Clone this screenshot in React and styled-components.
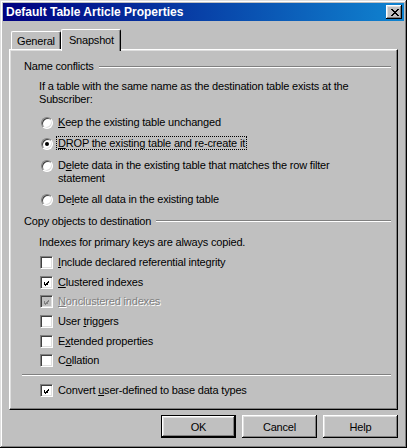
import React from 'react';
import styled, { createGlobalStyle } from 'styled-components';

const GlobalStyle = createGlobalStyle`
  body {
    margin: 0;
    background: #c0c0c0;
  }
`;

const Window = styled.div`
  width: 407px;
  height: 448px;
  box-sizing: border-box;
  padding: 3px;
  background: #c0c0c0;
  box-shadow: inset -1px -1px #000, inset 1px 1px #dfdfdf, inset -2px -2px #808080, inset 2px 2px #fff;
  display: flex;
  flex-direction: column;
  font-family: 'Liberation Sans', Arial, sans-serif;
  font-size: 11px;
  letter-spacing: -0.18px;
  color: #000;
`;

const TitleBar = styled.div`
  height: 18px;
  display: flex;
  align-items: center;
  justify-content: space-between;
  padding: 0 2px 0 3px;
  background: linear-gradient(90deg, #000080, #1084d0);
`;

const Title = styled.span`
  color: #fff;
  font-weight: bold;
  font-size: 12px;
  letter-spacing: 0;
`;

const CloseButton = styled.button`
  width: 16px;
  height: 14px;
  padding: 0 0 0 1px;
  border: none;
  background: #c0c0c0;
  box-shadow: inset -1px -1px #000, inset 1px 1px #fff, inset -2px -2px #808080, inset 2px 2px #dfdfdf;
  display: flex;
  align-items: center;
  justify-content: center;
`;

const Body = styled.div`
  padding: 8px 6px 0 6px;
  display: flex;
  flex-direction: column;
`;

const TabStrip = styled.div`
  display: flex;
  align-items: flex-end;
  height: 22px;
  margin-bottom: -2px;
  padding-left: 2px;
  position: relative;
  z-index: 1;
`;

const Tab = styled.div`
  box-sizing: border-box;
  height: ${(p) => (p.$active ? '22px' : '18px')};
  margin-bottom: ${(p) => (p.$active ? '0' : '2px')};
  padding: ${(p) => (p.$active ? '0 6px 2px 7px' : '0 5px')};
  display: flex;
  align-items: center;
  background: #c0c0c0;
  border-left: 1px solid #fff;
  border-top: 1px solid #fff;
  border-right: 1px solid #000;
  border-top-left-radius: 2px;
  border-top-right-radius: 2px;
  box-shadow: inset -1px 0 #808080;
`;

const Panel = styled.div`
  height: 361px;
  box-sizing: border-box;
  border: 1px solid;
  border-color: #fff #000 #000 #fff;
  box-shadow: inset -1px -1px #808080, inset 1px 1px #dfdfdf;
  padding: 10px 6px 0 14px;
  display: flex;
  flex-direction: column;
`;

const GroupHeading = styled.div`
  display: flex;
  align-items: center;
  gap: 5px;
  height: 13px;
  line-height: 13px;
  margin-top: ${(p) => p.$top || 0}px;

  &::after {
    content: '';
    flex: 1;
    border-top: 1px solid #808080;
    border-bottom: 1px solid #fff;
  }
`;

const Note = styled.div`
  line-height: 13px;
  padding-left: 15px;
  margin-top: ${(p) => p.$top || 0}px;
`;

const OptionList = styled.div`
  display: flex;
  flex-direction: column;
  margin-top: ${(p) => p.$top || 0}px;
`;

const RadioRow = styled.label`
  display: flex;
  align-items: flex-start;
  padding: ${(p) => (p.$nudge ? '5px 0 4px' : '4px 0')};
  padding-left: 17px;
  line-height: 13px;
`;

const RadioCircle = styled.span`
  flex: none;
  width: 12px;
  height: 12px;
  box-sizing: border-box;
  margin-top: 1px;
  border-radius: 50%;
  border: 1px solid;
  border-color: #808080 #fff #fff #808080;
  box-shadow: inset 1px 1px #404040, inset -1px -1px #dfdfdf;
  background: #fff;
  display: flex;
  align-items: center;
  justify-content: center;

  &::after {
    content: '';
    width: 4px;
    height: 4px;
    border-radius: 50%;
    background: ${(p) => (p.$checked ? '#000' : 'transparent')};
  }
`;

const RadioText = styled.span`
  margin-left: 5px;
  width: 300px;
`;

const Focus = styled.span`
  border: 1px dotted #000;
  margin: -1px 0 0 -2px;
  padding: 0 1px;
`;

const CheckRow = styled.label`
  display: flex;
  align-items: center;
  height: 19.6px;
  padding-left: 16px;
  color: ${(p) => (p.$disabled ? '#808080' : '#000')};
  text-shadow: ${(p) => (p.$disabled ? '1px 1px #fff' : 'none')};
  margin-top: ${(p) => p.$top || 0}px;
`;

const CheckBox = styled.span`
  flex: none;
  width: 13px;
  height: 13px;
  box-sizing: border-box;
  padding: 2px;
  border: 1px solid;
  border-color: #808080 #fff #fff #808080;
  box-shadow: inset 1px 1px #404040, inset -1px -1px #dfdfdf;
  background: ${(p) => (p.$disabled ? '#c0c0c0' : '#fff')};
  display: flex;
`;

const CheckText = styled.span`
  margin-left: 5px;
  line-height: 13px;
`;

const Separator = styled.div`
  margin: 3px 0 0 -2px;
  border-top: 1px solid #808080;
  border-bottom: 1px solid #fff;
`;

const ButtonRow = styled.div`
  display: flex;
  justify-content: flex-end;
  gap: 6px;
  margin-top: 5px;
`;

const Button = styled.button`
  width: 75px;
  height: 23px;
  box-sizing: border-box;
  padding: 0;
  font-family: inherit;
  font-size: 11px;
  letter-spacing: inherit;
  color: #000;
  background: #c0c0c0;
  border: ${(p) => (p.$default ? '1px solid #000' : 'none')};
  box-shadow: inset -1px -1px #000, inset 1px 1px #fff, inset -2px -2px #808080, inset 2px 2px #dfdfdf;
`;

const CheckMark = ({ color }) => {
  const cols = [2, 3, 4, 3, 2, 1, 0];
  return (
    <svg width="9" height="9" viewBox="0 0 9 9" shapeRendering="crispEdges">
      {cols.map((y, x) => (
        <rect key={x} x={x + 1} y={y + 1} width="1" height="3" fill={color} />
      ))}
    </svg>
  );
};

const Radio = ({ checked, children, nudge }) => (
  <RadioRow $nudge={nudge}>
    <RadioCircle $checked={checked} />
    <RadioText>{children}</RadioText>
  </RadioRow>
);

const Check = ({ checked, disabled, children, top }) => (
  <CheckRow $disabled={disabled} $top={top}>
    <CheckBox $disabled={disabled}>
      {checked && <CheckMark color={disabled ? '#808080' : '#000'} />}
    </CheckBox>
    <CheckText>{children}</CheckText>
  </CheckRow>
);

export default function App() {
  return (
    <>
      <GlobalStyle />
      <Window>
        <TitleBar>
          <Title>Default Table Article Properties</Title>
          <CloseButton>
            <svg width="8" height="7" viewBox="0 0 8 7" shapeRendering="crispEdges">
              <path d="M0 0h2v1h-2zM6 0h2v1h-2zM1 1h2v1h-2zM5 1h2v1h-2zM2 2h4v1h-4zM3 3h2v1h-2zM2 4h4v1h-4zM1 5h2v1h-2zM5 5h2v1h-2zM0 6h2v1h-2zM6 6h2v1h-2z" fill="#000" />
            </svg>
          </CloseButton>
        </TitleBar>
        <Body>
          <TabStrip>
            <Tab>General</Tab>
            <Tab $active>Snapshot</Tab>
          </TabStrip>
          <Panel>
            <GroupHeading>Name conflicts</GroupHeading>
            <Note $top={7}>
              If a table with the same name as the destination table exists at the
              <br />
              Subscriber:
            </Note>
            <OptionList $top={5.5}>
              <Radio>
                <u>K</u>eep the existing table unchanged
              </Radio>
              <Radio checked>
                <Focus>
                  <u>D</u>ROP the existing table and re-create it
                </Focus>
              </Radio>
              <Radio nudge>
                D<u>e</u>lete data in the existing table that matches the row filter
                <br />
                statement
              </Radio>
              <Radio>
                De<u>l</u>ete all data in the existing table
              </Radio>
            </OptionList>
            <GroupHeading $top={5}>Copy objects to destination</GroupHeading>
            <Note $top={8}>Indexes for primary keys are always copied.</Note>
            <OptionList $top={4.5}>
              <Check>
                <u>I</u>nclude declared referential integrity
              </Check>
              <Check checked>
                <u>C</u>lustered indexes
              </Check>
              <Check checked disabled>
                <u>N</u>onclustered indexes
              </Check>
              <Check>
                User <u>t</u>riggers
              </Check>
              <Check>
                E<u>x</u>tended properties
              </Check>
              <Check>
                C<u>o</u>llation
              </Check>
            </OptionList>
            <Separator />
            <Check checked top={5.5}>
              Convert <u>u</u>ser-defined to base data types
            </Check>
          </Panel>
          <ButtonRow>
            <Button $default>OK</Button>
            <Button>Cancel</Button>
            <Button>Help</Button>
          </ButtonRow>
        </Body>
      </Window>
    </>
  );
}
